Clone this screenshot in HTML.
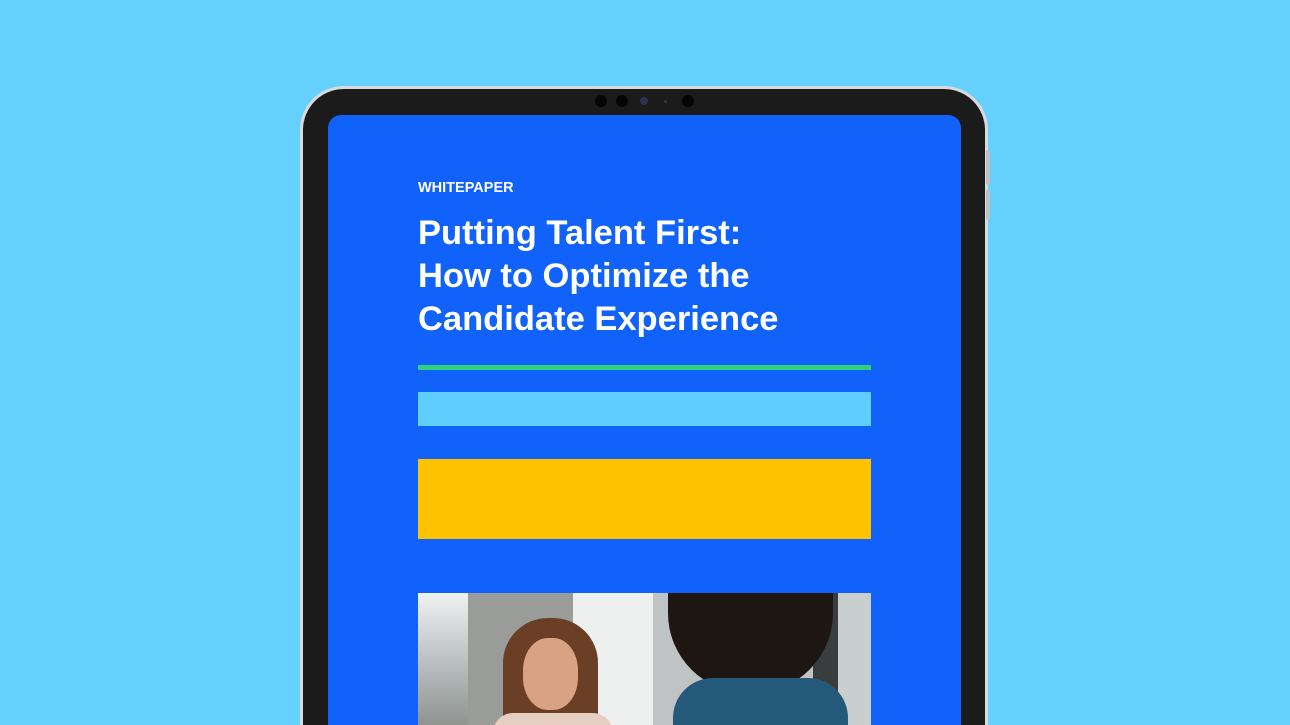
<!DOCTYPE html>
<html><head><style>
html,body{margin:0;padding:0;width:1290px;height:725px;overflow:hidden;}
body{background:#66d0fe;position:relative;font-family:"Liberation Sans",sans-serif;}
.frame{position:absolute;left:300px;top:86px;width:688px;height:639px;border-radius:44px 44px 0 0;background:#d8dadc;}
.bezel{position:absolute;left:303px;top:89px;width:682px;height:636px;border-radius:41px 41px 0 0;background:#1b1b1b;}
.screen{position:absolute;left:328px;top:115px;width:633px;height:610px;border-radius:13px 13px 0 0;background:#1062fa;overflow:hidden;}
.btn{position:absolute;left:986px;width:4px;background:#bfc2c5;border-radius:2px;}
.dot{position:absolute;border-radius:50%;background:#050505;}
.abs{position:absolute;}
</style></head><body>
<div class="frame"></div>
<div class="btn" style="top:150px;height:35px"></div>
<div class="btn" style="top:190px;height:30px"></div>
<div class="bezel"></div>
<div class="dot" style="left:595px;top:95px;width:12px;height:12px"></div>
<div class="dot" style="left:616px;top:95px;width:12px;height:12px"></div>
<div class="dot" style="left:640px;top:97px;width:8px;height:8px;background:#2a3450"></div>
<div class="dot" style="left:664px;top:100px;width:3px;height:3px;background:#333"></div>
<div class="dot" style="left:682px;top:95px;width:12px;height:12px"></div>
<div class="screen">
 <div class="abs" style="left:90px;top:65px;color:#fff;font-size:14.5px;font-weight:bold;">WHITEPAPER</div>
 <div class="abs" style="left:90px;top:97px;color:#fff;font-size:34.5px;font-weight:bold;line-height:43px;white-space:nowrap;">Putting Talent First:<br>How to Optimize the<br>Candidate Experience</div>
 <div class="abs" style="left:90px;top:250px;width:453px;height:5px;background:#2dd27a"></div>
 <div class="abs" style="left:90px;top:277px;width:453px;height:34px;background:#5fcdfd"></div>
 <div class="abs" style="left:90px;top:344px;width:453px;height:80px;background:#ffc200"></div>
 <div class="abs" style="left:90px;top:478px;width:453px;height:132px;background:#e9ecee;overflow:hidden;">
  <div class="abs" style="left:0;top:0;width:50px;height:140px;background:linear-gradient(#f0f2f2,#b9bfbf 50%,#8a8f8c)"></div>
  <div class="abs" style="left:50px;top:0;width:105px;height:140px;background:#9a9c9a"></div>
  <div class="abs" style="left:155px;top:0;width:80px;height:140px;background:#eef0f0"></div>
  <div class="abs" style="left:235px;top:0;width:175px;height:140px;background:#bfc3c4"></div>
  <div class="abs" style="left:395px;top:0;width:25px;height:140px;background:#3a3d3d"></div>
  <div class="abs" style="left:420px;top:0;width:33px;height:140px;background:#c9cfcf"></div>
  <div class="abs" style="left:85px;top:25px;width:95px;height:120px;border-radius:45px 45px 10px 10px;background:#6b3f25"></div>
  <div class="abs" style="left:105px;top:45px;width:55px;height:72px;border-radius:45%;background:#d9a282"></div>
  <div class="abs" style="left:75px;top:120px;width:120px;height:30px;border-radius:20px 20px 0 0;background:#e6cfc2"></div>
  <div class="abs" style="left:250px;top:0;width:165px;height:100px;border-radius:0 0 80px 80px;background:#1e1612"></div>
  <div class="abs" style="left:255px;top:85px;width:175px;height:60px;border-radius:40px 40px 0 0;background:#24597a"></div>
 </div>
</div>
</body></html>
